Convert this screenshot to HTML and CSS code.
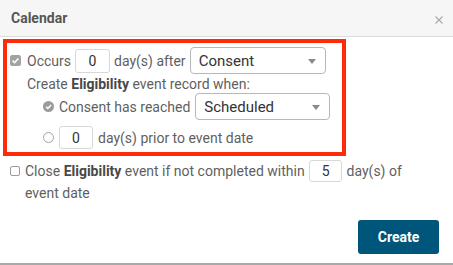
FILE: index.html
```html
<!DOCTYPE html>
<html lang="en">
<head>
    <meta charset="UTF-8">
    <meta name="viewport" content="width=device-width, initial-scale=1.0">
    <title>Calendar</title>
    <link rel="stylesheet" href="styles.css">
</head>
<body>

    <div class="dialog">
        <div class="dialog-header">
            <span class="title">Calendar</span>
            <svg class="close" width="8" height="8" viewBox="0 0 8 8">
                <path d="M0.5 0.5 L7.5 7.5 M7.5 0.5 L0.5 7.5" stroke="#a8a8a8" stroke-width="1.1" fill="none"/>
            </svg>
        </div>

        <div class="dialog-body">
            <div class="highlight">
                <div class="row row-main">
                    <span class="checkbox checked">
                        <svg width="11" height="11" viewBox="0 0 11 11"><path d="M2.6 5.6 L4.6 7.5 L8.4 3.5" stroke="#fff" stroke-width="1.6" fill="none"/></svg>
                    </span>
                    <span>Occurs</span>
                    <input type="text" class="num num-wide" value="0">
                    <span>day(s) after</span>
                    <div class="select select-event">Consent</div>
                </div>

                <p class="row-note">Create <b>Eligibility</b> event record when:</p>

                <div class="row row-option">
                    <svg class="option-icon" width="11" height="11" viewBox="0 0 11 11">
                        <circle cx="5.5" cy="5.5" r="5.5" fill="#9b9b9b"/>
                        <path d="M3 5.7 L4.8 7.4 L8.1 3.9" stroke="#fff" stroke-width="1.5" fill="none"/>
                    </svg>
                    <span>Consent has reached</span>
                    <div class="select select-status">Scheduled</div>
                </div>

                <div class="row row-option row-prior">
                    <span class="radio"></span>
                    <input type="text" class="num" value="0">
                    <span>day(s) prior to event date</span>
                </div>
            </div>

            <div class="close-row">
                <span class="checkbox"></span>
                <p>Close <b>Eligibility</b> event if not completed within <input type="text" class="num num-inline" value="5"> day(s) of<br>event date</p>
            </div>
        </div>

        <div class="dialog-footer">
            <button class="btn-create">Create</button>
        </div>
    </div>

</body>
</html>
```

FILE: styles.css
```css
body {
    margin: 0;
    font-family: Roboto, "Noto Sans", sans-serif;
    font-size: 14px;
    color: #5f5f5f;
    background-color: #ffffff;
}

.dialog {
    width: 453px;
    height: 263px;
    border-bottom: 2px solid #a9a9a9;
    display: flex;
    flex-direction: column;
}

.dialog-header {
    height: 36px;
    background-color: #f6f6f6;
    border-bottom: 1px solid #dcdcdc;
    display: flex;
    align-items: center;
    justify-content: space-between;
    padding: 0 10px 0 11px;
}

.title {
    font-weight: bold;
    color: #565656;
    margin-top: -1px;
}

.close {
    margin-top: 3px;
}

.dialog-body {
    padding: 2px 0 0 3px;
}

.highlight {
    width: 332px;
    border: 4px solid #ff2a0a;
    padding: 4px 0 1px 3px;
}

.row {
    display: flex;
    align-items: center;
}

.row-main {
    height: 27px;
    gap: 4px;
}

.row-main .checkbox {
    margin-right: 2px;
}

.row-note {
    margin: 1px 0 0;
    height: 18px;
    line-height: 18px;
    padding-left: 17px;
}

.row-option {
    height: 27px;
    padding-left: 33px;
    gap: 5px;
}

.row-prior {
    margin-top: 4px;
}

b {
    color: #484848;
}

.checkbox {
    width: 10px;
    height: 10px;
    box-sizing: border-box;
    border: 1px solid #9c9c9c;
    border-radius: 2px;
    background-color: #ffffff;
    display: inline-flex;
    flex-shrink: 0;
}

.checkbox.checked {
    width: 11px;
    height: 11px;
    background-color: #a3a3a3;
    border-color: #a3a3a3;
}

.checkbox.checked svg {
    margin: -1px;
}

.radio {
    width: 11px;
    height: 11px;
    box-sizing: border-box;
    border: 1px solid #a5a5a5;
    border-radius: 50%;
    flex-shrink: 0;
}

.num {
    width: 34px;
    height: 23px;
    box-sizing: border-box;
    border: 1px solid #d8d8d8;
    border-radius: 3px;
    font-family: Roboto, "Noto Sans", sans-serif;
    font-size: 14px;
    color: #333333;
    text-align: center;
    padding: 0;
    outline: none;
}

.num-wide {
    width: 35px;
    height: 24px;
}

.num-inline {
    width: 33px;
    height: 22px;
    vertical-align: middle;
    margin: -2px 1px 0;
}

.select {
    position: relative;
    box-sizing: border-box;
    height: 27px;
    border: 1px solid #b8b8b8;
    border-radius: 4px;
    background-color: #ffffff;
    color: #333333;
    font-size: 15px;
    display: flex;
    align-items: center;
    padding-left: 8px;
}

.select::after {
    content: "";
    position: absolute;
    right: 9px;
    top: 11px;
    border-left: 4px solid transparent;
    border-right: 4px solid transparent;
    border-top: 5px solid #8a8a8a;
}

.select-event {
    width: 136px;
}

.select-status {
    width: 135px;
}

.close-row {
    display: flex;
    align-items: flex-start;
    margin-top: 4px;
    padding-left: 7px;
}

.close-row .checkbox {
    margin-top: 6px;
    margin-right: 5px;
}

.close-row p {
    margin: 0;
    width: 400px;
    line-height: 22px;
}

.dialog-footer {
    display: flex;
    justify-content: flex-end;
    padding: 16px 14px 0 0;
}

.btn-create {
    width: 81px;
    height: 34px;
    background-color: #00567a;
    color: #ffffff;
    font-family: Roboto, "Noto Sans", sans-serif;
    font-size: 14px;
    font-weight: bold;
    border: none;
    border-radius: 3px;
    cursor: pointer;
}

.btn-create:hover {
    background-color: #004a6a;
}
```
